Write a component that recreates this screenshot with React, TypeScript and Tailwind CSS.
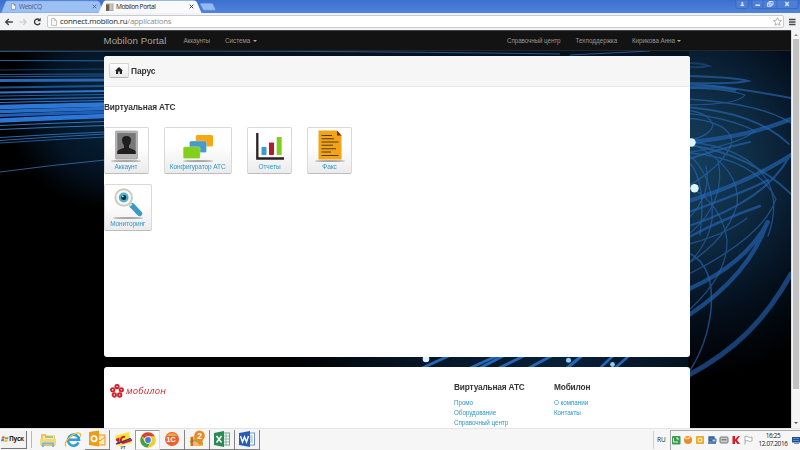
import React from "react";

const leftFibers: [number, number, number, string][] = [
  [60.5, 60.8, 1, "#2c6299"],
  [70, 69, 0.8, "#1c4a80"],
  [74.5, 74, 1, "#225a9a"],
  [76.8, 76, 0.8, "#2d6cb4"],
  [80.5, 80, 3, "#2868b4"],
  [87.5, 86, 2.2, "#1c5290"],
  [92.5, 91, 2, "#3079cc"],
  [96, 94.5, 1, "#225fa8"],
  [99.5, 97.5, 1.6, "#2462ab"],
  [102.5, 100.5, 1, "#3178c9"],
  [107, 104.5, 4.4, "#2c78d8"],
  [111.5, 108.5, 3.4, "#2a6dc6"],
  [115.5, 112, 3, "#205fb8"],
  [120, 115.5, 3.6, "#2c78da"],
  [122, 117.5, 1.6, "#2d79d8"],
  [125.5, 121.5, 1, "#3674b6"],
  [129.5, 125.5, 1.2, "#3673b4"],
  [137.5, 132, 1.2, "#2a68ad"],
  [140.5, 134, 1, "#2a68ad"],
  [143, 137, 0.9, "#2a62a2"],
  [172, 160, 0.9, "#35659d"],
];

function Backdrop() {
  return (
    <svg className="absolute inset-0 h-full w-full" viewBox="0 30 791 398" preserveAspectRatio="none">
      <defs>
        <radialGradient id="leftGlow" gradientUnits="userSpaceOnUse" cx="110" cy="105" r="105">
          <stop offset="0" stopColor="#082640" />
          <stop offset="0.6" stopColor="#041526" />
          <stop offset="1" stopColor="#000" />
        </radialGradient>
        <radialGradient id="rightGlow" gradientUnits="userSpaceOnUse" cx="680" cy="165" r="215">
          <stop offset="0" stopColor="#16405f" />
          <stop offset="0.3" stopColor="#103049" />
          <stop offset="0.5" stopColor="#0a2035" />
          <stop offset="0.72" stopColor="#040e1a" />
          <stop offset="1" stopColor="#000" />
        </radialGradient>
        <linearGradient id="gapGlow" x1="0" x2="1" y1="0" y2="0">
          <stop offset="0" stopColor="#000" />
          <stop offset="0.35" stopColor="#061626" />
          <stop offset="0.7" stopColor="#08203a" />
          <stop offset="1" stopColor="#05131f" />
        </linearGradient>
        <filter id="soften" x="-5%" y="-5%" width="110%" height="110%">
          <feGaussianBlur stdDeviation="0.5" />
        </filter>
      </defs>
      <rect x="0" y="30" width="791" height="398" fill="#000" />
      <rect x="0" y="30" width="300" height="200" fill="url(#leftGlow)" />
      <rect x="400" y="30" width="391" height="398" fill="url(#rightGlow)" />
      <rect x="104" y="51" width="585" height="5" fill="#04121f" />
      <rect x="280" y="356" width="408" height="11" fill="url(#gapGlow)" />
      <g fill="none">
        {leftFibers.map(([a, b, w, c]) => (
          <path key={a} d={`M0 ${a} Q52 ${(a + b) / 2 - (a - b) * 0.08} 105 ${b}`} stroke={c} strokeWidth={w} />
        ))}
        <path d="M0 51.5 Q300 50 560 54 M570 55 Q610 53 650 51" stroke="#286096" strokeWidth="0.9" />
      </g>
      <g fill="none" stroke="#2a69b2" strokeLinecap="round" filter="url(#soften)">
        <g strokeWidth="1.3" opacity="0.62">
          <path d="M685 63 Q702 63 709 66 Q700 68 685 67" stroke="#1f4f88" strokeWidth="2" />
          <path d="M685 76 Q735 77 748 81 Q735 84 685 83" strokeWidth="2" />
          <path d="M685 84 Q715 84 791 98" strokeWidth="1.8" />
          <path d="M685 88 Q725 88 745 95 Q738 105 685 105" />
          <path d="M685 99 Q760 103 791 123" />
          <path d="M685 107 Q755 112 789 144" strokeWidth="1.8" />
          <path d="M685 110 Q708 112 713 125 Q710 137 685 141" />
          <path d="M685 113 Q730 118 755 131 Q738 145 685 153" />
          <path d="M689 142 Q745 147 767 180 Q780 203 768 236" />
          <path d="M689 145 Q750 154 791 194" strokeWidth="1.8" />
          <path d="M689 153 Q755 158 776 199 Q764 236 689 274" />
          <path d="M691 143 Q742 168 737 205 Q727 239 689 263" />
          <path d="M695 190 Q722 207 727 240 Q728 275 689 310" />
          <path d="M685 118 Q730 121 732 142 Q725 165 685 188" />
          <path d="M689 155 Q715 177 712 220 Q708 244 689 263" />
          <path d="M689 162 Q707 182 700 235" />
          <path d="M689 253 Q715 266 711 310 Q707 345 689 372" strokeWidth="1.6" />
          <path d="M689 244 Q727 234 747 218" />
          <path d="M689 218 Q712 194 706 166" />
          <path d="M689 234 Q727 202 718 160" />
        </g>
        <g strokeWidth="4.2" stroke="#2463b0" opacity="0.68">
          <path d="M689 142 Q747 137 791 119" />
          <path d="M689 87 Q715 86 735 90" strokeWidth="3" />
          <path d="M689 159 Q715 150 750 142" strokeWidth="2.2" />
          <path d="M689 201 Q751 181 791 155" />
          <path d="M689 226 Q765 201 789 157" strokeWidth="2.2" />
          <path d="M689 212 Q750 190 768 180" strokeWidth="2.5" />
          <path d="M689 237 Q723 219 760 206" strokeWidth="2.5" />
          <path d="M689 289 Q745 264 768 222" />
          <path d="M689 315 Q749 275 767 223" />
          <path d="M687 376 C736 350 766 319 791 274" strokeWidth="5" stroke="#215ba4" opacity="1" />
        </g>
        <g strokeWidth="4" stroke="#2866b8">
          <path d="M420 369 L453 354 M468 369 L501 354 M478 369 L507 354 M497 369 L528 354 M527 369 L555 354 M566 369 L584 354" strokeWidth="3" />
          <path d="M599 369 L615 354 M614 369 L631 354" strokeWidth="2.5" />
        </g>
      </g>
      <g fill="#dcf5fb">
        <circle cx="426" cy="359" r="3.3" />
        <circle cx="568.5" cy="360.3" r="2.5" fill="#8acdf2" />
        <circle cx="612.5" cy="364.5" r="2.4" fill="#8acdf2" />
        <circle cx="691.5" cy="142.5" r="4.2" />
        <circle cx="694.5" cy="188.2" r="4.2" />
      </g>
    </svg>
  );
}

function PageIcon({ className }: { className: string }) {
  return (
    <svg className={className} viewBox="0 0 6 8">
      <path d="M.5 .5 H3.6 L5.5 2.5 V7.5 H.5 Z M3.5 .5 V2.6 H5.5" fill="#f8fafc" stroke="currentColor" strokeWidth=".7" />
    </svg>
  );
}

function Cross({ className }: { className: string }) {
  return (
    <svg className={className} viewBox="0 0 5 5">
      <path d="M.7 .7 L4.3 4.3 M4.3 .7 L.7 4.3" stroke="currentColor" strokeWidth=".95" />
    </svg>
  );
}

function TabStrip() {
  return (
    <div className="relative flex h-[13px] items-start bg-[#4376d3] font-['Open_Sans','Noto_Sans',sans-serif] text-[6.6px] leading-[13px]">
      <svg className="absolute inset-0 h-full w-full" viewBox="0 0 800 13">
        <defs>
          <linearGradient id="strip" x1="0" x2="0" y1="0" y2="1">
            <stop offset="0" stopColor="#3c70d0" />
            <stop offset="1" stopColor="#5083da" />
          </linearGradient>
        </defs>
        <rect width="800" height="13" fill="url(#strip)" />
        <path d="M1 13 L5.5 2 Q6 .8 8 .8 H97 Q99 .8 99.8 2.5 L104 13 Z" fill="#9dc0f4" stroke="#5c87cb" strokeWidth=".5" />
        <path d="M98.500 13 L103.500 2 Q104 .5 106 .5 H194 Q196 .5 196.800 2 L201.500 13 Z" fill="#f7f9fb" />
        <path d="M200.500 3.200 H211 Q212.500 3.200 213 4.200 L215.300 9.200 Q215.600 10.200 214.500 10.200 H205 Q203.500 10.200 203 9.200 L200 4 Z" fill="#94b9f2" stroke="#5f8bd5" strokeWidth=".4" />
        <g fill="#4d7fd7" stroke="#315ba5" strokeWidth=".5">
          <path d="M736 0 H748 V7 Q748 8.500 746.500 8.500 H737.500 Q736 8.500 736 7 Z" />
          <path d="M752 0 H798 V7 Q798 8.500 796.500 8.500 H753.500 Q752 8.500 752 7 Z M763 0 V8.500 M777 0 V8.500" />
        </g>
        <g fill="#dfe9fb">
          <circle cx="742.300" cy="3" r="1" />
          <path d="M740.200 6 Q740.500 4.300 742.300 4 Q744.200 4.300 744.400 6 Z M755.500 4.500 H760 V6 H755.500 Z" />
          <path d="M769 1.500 H773 V5 H769 Z M767.500 3 H771.200 V6.300 H767.500 Z" fill="none" stroke="#dfe9fb" strokeWidth=".9" />
          <path d="M785.200 2 L788.800 6 M788.800 2 L785.200 6" stroke="#dfe9fb" strokeWidth="1.200" />
        </g>
      </svg>
      <div className="relative flex w-[97px] items-center pl-[11px]">
        <PageIcon className="h-[7px] w-[5px] text-[#53749f]" />
        <span className="ml-[3px] flex-1 tracking-[-0.38px] text-[#4a6389]">WebICQ</span>
        <Cross className="size-[5px] text-[#4f6a93]" />
      </div>
      <div className="relative ml-[9px] flex w-[88px] items-center">
        <svg className="h-[8px] w-[8px]" viewBox="0 0 8 8">
          <path d="M0 1 H3 V8 H0 Z" fill="#665f55" />
          <path d="M3 .5 H7.500 V8 H3 Z" fill="#a9a79f" />
          <path d="M4 2 H6.500 M4 4 H6.500 M4 6 H6.500" stroke="#eee" strokeWidth=".8" />
          <path d="M0 1 H3" stroke="#dda33e" />
        </svg>
        <span className="ml-[2px] flex-1 whitespace-nowrap tracking-[-0.42px] text-[#222]">Mobilon Portal</span>
        <Cross className="size-[5px] text-[#333]" />
      </div>
    </div>
  );
}

function AddressBar() {
  return (
    <div className="flex h-[17px] items-center bg-[#f2f3f5] pl-[4px] pr-[4px]">
      <svg className="h-[10px] w-[38px]" viewBox="0 0 38 10" fill="none">
        <path d="M8.800 5 H2 M4.800 2 L1.700 5 L4.800 8" stroke="#444" strokeWidth="1.400" />
        <path d="M15.500 5 H22 M19.300 2.200 L22.200 5 L19.300 7.800" stroke="#c7c9cc" strokeWidth="1.100" />
        <path d="M36 6.200 A2.900 2.900 0 1 1 35.400 2.700" stroke="#3c3c3c" strokeWidth="1.400" />
        <path d="M36.700 .8 V4.300 H33.200 Z" fill="#3c3c3c" />
      </svg>
      <div className="ml-[5px] flex h-[13px] flex-1 items-center rounded-[2px] border border-[#c8cbd0] bg-white pl-[3px] pr-[1px]">
        <PageIcon className="h-[8px] w-[6px] text-[#a9a9a9]" />
        <span className="ml-[3px] flex-1 whitespace-nowrap font-['Open_Sans','Noto_Sans',sans-serif] text-[7.8px] leading-none tracking-[-0.21px] text-[#222]">
          connect.mobilon.ru<span className="text-[#8c8c8c]">/applications</span>
        </span>
        <svg className="size-[9px]" viewBox="0 0 10 10">
          <path d="M5 .7 L6.300 3.700 L9.500 4 L7.100 6.100 L7.800 9.300 L5 7.600 L2.200 9.300 L2.900 6.100 L.5 4 L3.700 3.700 Z" fill="#fff" stroke="#999" strokeWidth=".8" />
        </svg>
      </div>
      <svg className="ml-[5px] h-[8px] w-[7px]" viewBox="0 0 7 8">
        <path d="M0 1.500 H6.500 M0 4 H6.500 M0 6.500 H6.500" stroke="#4a4a4a" strokeWidth="1.500" />
      </svg>
    </div>
  );
}

function Caret() {
  return <i className="ml-[2.5px] inline-block border-x-[2px] border-t-[2px] border-x-transparent border-t-[#aaa] align-middle" />;
}

function NavBar() {
  return (
    <nav className="relative flex h-[21px] items-center border-b border-[#252525] border-t-[#3f4244] border-t bg-[#131313] pl-[103.5px] text-[6.3px] leading-[20px] text-[#959595]">
      <span className="w-[80px] whitespace-nowrap text-[9.7px] tracking-[0.08px] text-[#a4a4a4]">Mobilon Portal</span>
      <span className="w-[41.500px] whitespace-nowrap tracking-[-0.1px]">Аккаунты</span>
      <span className="w-[282px] whitespace-nowrap">Система<Caret /></span>
      <span className="w-[68.500px] whitespace-nowrap tracking-[-0.1px]">Справочный центр</span>
      <span className="w-[56.500px] whitespace-nowrap">Техподдержка</span>
      <span className="whitespace-nowrap tracking-[-0.06px]">Кирикова Анна<Caret /></span>
    </nav>
  );
}

const Shadow = ({ y = 33 }: { y?: number }) => <ellipse cx="20" cy={y} rx="15" ry="1.1" fill="#8d8d8d" opacity=".75" />;

const icons = {
  account: (
    <svg className="h-[36px] w-[40px]" viewBox="0 0 40 36">
      <Shadow />
      <rect x="9.500" y="3" width="22" height="28" rx="1" fill="#b5b5b5" stroke="#929292" strokeWidth=".6" />
      <rect x="11.300" y="5" width="18.400" height="21" fill="#777" />
      <path d="M11.300 26 V23.500 Q12 21.500 18 20 V17.500 Q16 15.500 16 12 Q16 8 20.500 8 Q25 8 25 12 Q25 15.500 23 17.500 V20 Q29 21.500 29.700 23.500 V26 Z" fill="#211d1c" />
    </svg>
  ),
  config: (
    <svg className="h-[36px] w-[40px]" viewBox="0 0 40 36">
      <Shadow />
      <rect x="17.800" y="7" width="17.200" height="11.600" rx="1.500" fill="#f8a713" />
      <rect x="11.500" y="13" width="17" height="11.600" rx="1.500" fill="#459bc9" stroke="#e8f2f6" strokeWidth=".3" />
      <rect x="5.200" y="18.800" width="17" height="11.800" rx="1.500" fill="#82cf1c" stroke="#e9f5dc" strokeWidth=".3" />
    </svg>
  ),
  reports: (
    <svg className="h-[36px] w-[40px]" viewBox="0 0 40 36">
      <path d="M7.300 5 V30.500 H34" fill="none" stroke="#2b2020" strokeWidth="2.300" />
      <rect x="11.500" y="19" width="5" height="8" rx=".7" fill="#3d9cca" />
      <rect x="19" y="14.500" width="5" height="12.500" rx=".7" fill="#b31c2b" />
      <rect x="26.700" y="9" width="5" height="18" rx=".7" fill="#84cc20" />
    </svg>
  ),
  fax: (
    <svg className="h-[36px] w-[40px]" viewBox="0 0 40 36">
      <Shadow />
      <path d="M8.500 2.500 H27 L31.500 7.500 V31.500 H8.500 Z" fill="#f0a416" />
      <path d="M27 2.500 V7.500 H31.500 Z" fill="#8b2416" />
      <path d="M11.500 7.500 H22 M11.500 10.700 H24 M11.500 14 H28.500 M11.500 17.300 H23 M11.500 20.700 H26 M11.500 24 H21 M11.500 27.500 H28.500" stroke="#5a3911" strokeWidth="1.100" />
    </svg>
  ),
  monitoring: (
    <svg className="h-[36px] w-[40px]" viewBox="0 0 40 36">
      <Shadow />
      <path d="M24 20.500 L31.500 28.500" stroke="#3b99c6" strokeWidth="5.400" strokeLinecap="round" />
      <path d="M20.500 17.500 L23.500 20.500" stroke="#d7dddd" strokeWidth="3" />
      <circle cx="15.700" cy="12.500" r="8.300" fill="#f5faf8" stroke="#cdc9be" strokeWidth="2" />
      <circle cx="15.700" cy="12.500" r="4.900" fill="#53aeca" />
      <circle cx="15.700" cy="12.500" r="2.500" fill="#073042" />
      <circle cx="14.800" cy="11.300" r=".9" fill="#dff4fa" />
    </svg>
  ),
};

function Tile({ icon, label, className }: { icon: React.ReactNode; label: string; className: string }) {
  return (
    <div
      className={`flex h-[47px] flex-col items-center rounded-[2px] border border-[#d9d9d9] border-b-[#bcbcbc] bg-linear-to-b from-white from-40% to-[#ebebeb] ${className}`}
    >
      {icon}
      <span className="-mt-px whitespace-nowrap text-[6.5px] leading-[8px] tracking-[-0.08px] text-[#2f97c9]">{label}</span>
    </div>
  );
}

function Links({ title, items }: { title: string; items: string[] }) {
  return (
    <div className="w-[100px] pt-[15px]">
      <h3 className="whitespace-nowrap text-[8.3px] font-bold leading-[10px] tracking-[-0.17px] text-[#333]">{title}</h3>
      <ul className="mt-[6px] text-[6.3px] leading-[10px] tracking-[-0.06px] text-[#3096c8]">
        {items.map((t) => (
          <li key={t} className="whitespace-nowrap">{t}</li>
        ))}
      </ul>
    </div>
  );
}

function MobilonLogo() {
  const petals: [number, number][] = [[7, 2.600], [11.300, 5.800], [9.700, 11], [4.300, 11], [2.700, 5.800]];
  return (
    <div className="flex h-[15px] items-center">
      <svg className="h-[14px] w-[14px]" viewBox="0 0 14 14">
        {petals.map(([x, y]) => (
          <circle key={`${x}-${y}`} cx={x} cy={y} r="1.700" fill="#fff" stroke="#d5202a" strokeWidth="1.900" />
        ))}
      </svg>
      <span className="ml-[2px] font-['Open_Sans','Noto_Sans',sans-serif] text-[9.5px] font-medium italic leading-none tracking-[0.2px] text-[#c9222c]">мобилон</span>
    </div>
  );
}

function TaskButton({ children, pressed, flat }: { children: React.ReactNode; pressed?: boolean; flat?: boolean }) {
  return (
    <div
      className={`flex h-[20px] w-[25px] items-center justify-center ${
        flat ? "" : pressed ? "border border-[#9b9b9b] border-b-[#ddd] border-r-[#ddd] bg-[#fdfdfd]" : "border-b border-r border-[#858585] bg-[#f4f4f4]"
      }`}
    >
      <svg className="size-[18px]" viewBox="0 0 18 18">{children}</svg>
    </div>
  );
}

const glyph = "font-['Liberation_Sans',sans-serif] font-bold";

function TaskBar() {
  return (
    <div className="flex h-[22px] items-center border-t border-[#e4e4e4] bg-[#f6f6f6] font-['Open_Sans','Noto_Sans',sans-serif] text-[6.5px] text-[#222]">
      <div className="ml-[1px] flex h-[18px] w-[26px] items-center border-b border-r border-[#777] bg-[#f2f2f2]">
        <svg className="h-[8px] w-[8px]" viewBox="0 0 8 8">
          <path d="M1 1.800 Q2.500 .8 3.800 1.700 L3.200 3.800 Q2 3 .5 3.800 Z" fill="#e3562a" />
          <path d="M4.300 1.900 Q6 2.800 7.500 1.800 L7 4 Q5.300 4.700 3.800 4 Z" fill="#6fb53b" />
          <path d="M.4 4.300 Q2 3.500 3.100 4.300 L2.500 6.500 Q1.300 5.700 0 6.500 Z" fill="#3b82d0" />
          <path d="M3.600 4.500 Q5.200 5.300 6.800 4.500 L6.200 6.700 Q4.600 7.300 3 6.600 Z" fill="#f4bd2c" />
        </svg>
        <span className="font-bold tracking-[-0.3px]">Пуск</span>
      </div>
      <i className="ml-[4px] h-[17px] w-px bg-[#b9b9b9]" />
      <div className="ml-[3px] flex">
        <TaskButton flat>
          <path d="M2 3 H7 L8 4.500 H16 V15 H2 Z" fill="#e9c668" />
          <path d="M4 5 H15 V11 H4 Z" fill="#f8e9ac" />
          <path d="M6 6 H14" stroke="#83b468" strokeWidth="1.300" />
          <path d="M1 8 H17 V14 H1 Z" fill="#f3d77d" />
          <path d="M4 16 V12.500 H14 V16" fill="none" stroke="#7ab7db" strokeWidth="2" />
        </TaskButton>
        <TaskButton flat>
          <path d="M14.500 11.500 A5.500 5.500 0 1 1 15 8.800 H5" fill="none" stroke="#2e9ddd" strokeWidth="2.600" />
          <path d="M2 15.500 Q-.5 12 6 6 Q13 .5 16 2.500 Q17 3.500 16 6" fill="none" stroke="#edbd38" strokeWidth="1.300" />
        </TaskButton>
        <TaskButton>
          <rect x="7" y="5" width="10" height="10" fill="#fce7b6" stroke="#e59a23" />
          <path d="M7 8 L12 11 L17 7" fill="none" stroke="#e59a23" />
          <path d="M1 2 L11 .5 V16.500 L1 15 Z" fill="#f09a15" />
          <circle cx="6" cy="8.700" r="2.700" fill="none" stroke="#fff" strokeWidth="1.700" />
        </TaskButton>
        <TaskButton flat>
          <path d="M1 5 L15 1 L17 12 L4 15 Z" fill="#f7e431" />
          <path d="M2 9 L4.500 8 V13 M11 6 A3 3 0 1 0 9 12 L18 9" fill="none" stroke="#c62032" strokeWidth="2" />
          <path d="M2 13 L17 7.500" stroke="#5b2a86" strokeWidth="1.400" />
          <text x="6.500" y="18" fontSize="4" fill="#333" className={glyph}>УТ</text>
        </TaskButton>
        <TaskButton pressed>
          <circle cx="9" cy="9" r="7.600" fill="#f3c52d" />
          <path d="M9 9 L2.300 5.300 A7.600 7.600 0 0 1 15.700 5.300 Z" fill="#da4437" />
          <path d="M2.300 5.300 A7.600 7.600 0 0 0 8.500 16.600 L12 10.500 L6 11 Z" fill="#40a34c" />
          <path d="M9 5.300 H15.700 A7.600 7.600 0 0 1 9 16.600 L12.200 10 Z" fill="#f5cb35" />
          <circle cx="9" cy="9" r="3.700" fill="#fff" />
          <circle cx="9" cy="9" r="2.900" fill="#417ed4" />
        </TaskButton>
        <TaskButton>
          <circle cx="9" cy="9" r="7" fill="#e9612b" />
          <path d="M3 6 Q9 0 15 6" fill="#f4a83b" />
          <text x="3.200" y="12" fontSize="7.500" fill="#fff" className={glyph}>1С</text>
        </TaskButton>
        <TaskButton>
          <path d="M2 7 L7 6 L11 8 L15 6 V16 H2 Z" fill="#f3ba61" />
          <path d="M2 12 L7 10 L15 14" stroke="#87b158" strokeWidth="2" fill="none" />
          <path d="M4 7 V16" stroke="#d24d36" strokeWidth="1.600" />
          <circle cx="11.500" cy="5.800" r="5.300" fill="#ed8924" />
          <path d="M7.500 9 L12 16 L15 9 Z" fill="#ed8924" />
          <text x="9.200" y="9" fontSize="8.500" fill="#fff" className={glyph}>2</text>
        </TaskButton>
        <TaskButton>
          <rect x="7" y="3" width="9.500" height="12" fill="#fff" stroke="#6da884" />
          <path d="M9 6 H16 M9 9 H16 M9 12 H16 M13 3 V15" stroke="#6da884" strokeWidth=".8" />
          <path d="M1 3 L11 1 V17 L1 15 Z" fill="#2b8a52" />
          <path d="M3.500 6 L8.500 12.500 M8.500 6 L3.500 12.500" stroke="#fff" strokeWidth="1.500" />
        </TaskButton>
        <TaskButton>
          <rect x="7" y="3" width="9.500" height="12" fill="#fff" stroke="#6e91c5" />
          <path d="M12 6 H15 M12 8 H15 M12 10 H15 M12 12 H15" stroke="#6e91c5" strokeWidth=".8" />
          <path d="M1 3 L12 1 V17 L1 15 Z" fill="#285eb0" />
          <path d="M2.500 6 L4.500 12 L6.500 7 L8.500 12 L10.500 6" fill="none" stroke="#fff" strokeWidth="1.400" />
        </TaskButton>
      </div>
      <i className="ml-auto h-[18px] w-px bg-[#cfcfcf]" />
      <span className="ml-[3px] w-[13px]">RU</span>
      <div className="flex h-[20px] w-[130px] items-center border-l border-t border-[#aaa]">
        <svg className="h-[12px] w-[84px]" viewBox="0 0 84 12">
          <rect x="1" y="2" width="8.500" height="8.500" rx="1" fill="#399c4b" />
          <path d="M2.500 4 V8 H7 M5 4 H7 V6" fill="none" stroke="#e9f8e9" />
          <circle cx="17" cy="6" r="4" fill="#ee8a27" />
          <path d="M14 4 Q19 6 19 1" fill="none" stroke="#fbdf9e" strokeWidth="1.500" />
          <rect x="25" y="2" width="8" height="8" rx="1" fill="#efab23" />
          <circle cx="29" cy="6" r="2" fill="none" stroke="#fff" />
          <path d="M38 3 H43 V7 H38 Z M37 9 H45" fill="#477db4" stroke="#315f91" strokeWidth="1.300" />
          <path d="M41 5 H45 V8 H41 Z" fill="#aed4e8" stroke="#39689b" />
          <rect x="49" y="3" width="8" height="6" rx="1" fill="#c9c9c9" stroke="#777" />
          <path d="M50.500 5.800 H55.500" stroke="#666" />
          <path d="M61.500 2 H64 V5.500 L67 2 H69 L66 6 L69 10 H66.500 L64 7 V10 H61.500 Z" fill="#d51c27" />
          <path d="M74 10.500 V2 M74 2.500 Q76 1.500 77.500 3 Q79 4 81 3 V7 Q79 8 77.500 7 Q76 6 74 7" fill="#fff" stroke="#999" strokeWidth=".8" />
        </svg>
        <div className="ml-[4px] flex w-[28px] flex-col items-center text-[6.5px] leading-[8px] tracking-[-0.42px]">
          <div>16:25</div>
          <div className="whitespace-nowrap">12.07.2016</div>
        </div>
        <svg className="ml-auto h-[7px] w-[8px]" viewBox="0 0 8 7">
          <rect width="8" height="5.500" fill="#234f8f" />
          <path d="M1 1.500 H7 M1 3.500 H7" stroke="#4d89d0" />
          <path d="M2 6.500 H7" stroke="#7895b7" />
        </svg>
      </div>
    </div>
  );
}

export default function App() {
  return (
    <div className="flex h-[450px] w-[800px] flex-col overflow-hidden bg-white font-['Liberation_Sans',Arial,sans-serif]">
      <TabStrip />
      <AddressBar />
      <div className="flex h-[398px]">
        <main className="relative h-full w-[791px] overflow-hidden">
          <Backdrop />
          <NavBar />
          <div className="relative ml-[103.5px] mt-[4.5px] flex w-[586px] flex-col gap-[10px]">
            <section className="h-[301px] overflow-hidden rounded-[3px] bg-white">
              <header className="flex h-[31.5px] items-center border-b border-[#e9e9e9] bg-[#f6f6f6] pl-[5.5px]">
                <div className="flex h-[15px] w-[20px] items-center justify-center rounded-[2px] border border-[#d4d4d4] border-b-[#b7b7b7] bg-linear-to-b from-white to-[#e9e9e9]">
                  <svg className="h-[7px] w-[8px]" viewBox="0 0 8 7">
                    <path d="M4 0 L8 3.800 H7 V7 H4.800 V4.500 H3.200 V7 H1 V3.800 H0 Z" fill="#222" />
                  </svg>
                </div>
                <h1 className="ml-[2px] text-[8.4px] font-bold leading-none tracking-[-0.1px] text-[#333]">Парус</h1>
              </header>
              <h2 className="mt-[14.5px] pl-[0.5px] text-[8.3px] font-bold leading-[10px] tracking-[-0.13px] text-[#333]">Виртуальная АТС</h2>
              <div className="mt-[15.5px] flex gap-[15px]">
                <Tile icon={icons.account} label="Аккаунт" className="w-[45px]" />
                <Tile icon={icons.config} label="Конфигуратор АТС" className="w-[68.5px]" />
                <Tile icon={icons.reports} label="Отчеты" className="w-[45px]" />
                <Tile icon={icons.fax} label="Факс" className="w-[45px]" />
              </div>
              <div className="mt-[10px] flex">
                <Tile icon={icons.monitoring} label="Мониторинг" className="w-[48.5px]" />
              </div>
            </section>
            <section className="flex h-[70px] rounded-[3px] bg-white pl-[6.5px]">
              <div className="w-[344px] pt-[17px]">
                <MobilonLogo />
              </div>
              <Links title="Виртуальная АТС" items={["Промо", "Оборудование", "Справочный центр"]} />
              <Links title="Мобилон" items={["О компании", "Контакты"]} />
            </section>
          </div>
        </main>
        <aside className="flex w-[9px] flex-col items-center justify-between border-l border-[#ddd] bg-[#f4f4f4]">
          <i className="mt-[4px] border-x-[2px] border-b-[2px] border-x-transparent border-b-[#888]" />
          <div className="mt-[3px] h-[350px] w-[6px] bg-[#c1c1c1]" />
          <i className="mb-[4px] mt-auto border-x-[2px] border-t-[2px] border-x-transparent border-t-[#555]" />
        </aside>
      </div>
      <TaskBar />
    </div>
  );
}
